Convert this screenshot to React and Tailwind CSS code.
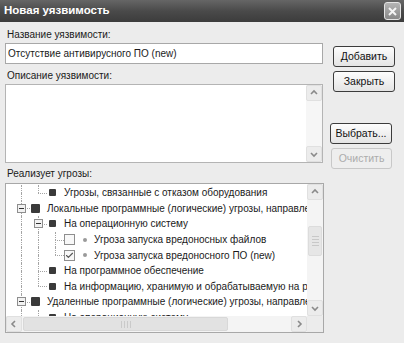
import { Check } from 'lucide-react'

const font = { fontFamily: '"Liberation Sans", Arial, sans-serif' }

function Btn({ children, disabled, className = '' }) {
  return (
    <div
      className={`h-[21px] flex items-center justify-center rounded-[3px] border text-[10.5px] ${
        disabled
          ? 'border-[#c8c8c8] text-[#acacac] bg-[#eeeeee]'
          : 'border-[#3c3c3c] text-[#111] bg-gradient-to-b from-[#fdfdfd] to-[#e4e4e4]'
      } ${className}`}
    >
      {children}
    </div>
  )
}

function Arrow({ dir }) {
  const paths = {
    up: 'M2 6 L5 3 L8 6',
    down: 'M2 4 L5 7 L8 4',
    left: 'M6 2 L3 5 L6 8',
    right: 'M4 2 L7 5 L4 8'
  }
  return (
    <svg width="10" height="10" viewBox="0 0 10 10">
      <path d={paths[dir]} fill="none" stroke="#8a8a8a" strokeWidth="1.6" />
    </svg>
  )
}

function SbBtn({ dir }) {
  return (
    <div className="w-[16px] h-[16px] flex-shrink-0 flex items-center justify-center bg-[#ececec] border border-[#e0e0e0] rounded-[2px]">
      <Arrow dir={dir} />
    </div>
  )
}

function Cell({ v = 'none', h = false, box = false }) {
  // v: none | full | top
  return (
    <div className="w-[17px] h-full flex-shrink-0 flex flex-col items-center relative">
      <div className="h-1/2 w-full flex justify-center">
        {v !== 'none' && <div className="border-l border-dotted border-[#a4a4a4] h-full" />}
      </div>
      <div className="h-1/2 w-full flex justify-center">
        {v === 'full' && <div className="border-l border-dotted border-[#a4a4a4] h-full" />}
      </div>
      {h && (
        <div className="absolute top-1/2 left-[8px] w-[9px] border-t border-dotted border-[#a4a4a4]" />
      )}
      {box && (
        <div className="absolute top-[3px] left-[4px] w-[9px] h-[9px] bg-[#f2f2f2] border border-[#8e8e8e] flex items-center justify-center">
          <div className="w-[5px] h-px bg-[#333]" />
        </div>
      )}
    </div>
  )
}

function Row({ cells, children }) {
  return (
    <div className="h-[15.6px] flex items-center whitespace-nowrap">
      {cells}
      {children}
    </div>
  )
}

function Sq({ big }) {
  return (
    <div className="w-[17px] flex-shrink-0 flex items-center">
      <div
        className={`${big ? 'w-[9px] h-[9px] ml-[1px]' : 'w-[7px] h-[7px] ml-[2px]'} bg-[#3a3a3a] rounded-[1px]`}
      />
    </div>
  )
}

function Leaf({ checked }) {
  return (
    <>
      <div className="w-[11px] h-[11px] flex-shrink-0 border border-[#8e8e8e] bg-[#f8f8f8] flex items-center justify-center">
        {checked && <Check size={9} strokeWidth={3} color="#555" />}
      </div>
      <div className="w-[19px] flex-shrink-0 flex justify-center">
        <div className="w-[4px] h-[4px] rounded-full bg-[#9a9a9a]" />
      </div>
    </>
  )
}

export default function App() {
  return (
    <div className="w-[404px] h-[343px] bg-[#ececec] text-[#1a1a1a] overflow-hidden flex flex-col" style={font}>
      {/* title bar */}
      <div className="h-[22px] flex-shrink-0 flex items-center justify-between bg-gradient-to-b from-[#666] via-[#4a4a4a] to-[#3c3c3c] pl-[4px] pr-[3px]">
        <span className="text-white font-bold text-[11.5px]">Новая уязвимость</span>
        <div className="w-[17px] h-[18px] rounded-[3px] border border-[#e4e4e4] bg-gradient-to-b from-[#b4b4b4] to-[#888] flex items-center justify-center">
          <svg width="11" height="11" viewBox="0 0 11 11">
            <path d="M2 2 L9 9 M9 2 L2 9" stroke="#f4f4f4" strokeWidth="2" />
          </svg>
        </div>
      </div>

      <div className="flex flex-1">
        {/* left column */}
        <div className="ml-[5px] w-[319px] flex flex-col text-[10px]">
          <div className="mt-[7px] h-[12px] leading-[12px] pl-[2px]">Название уязвимости:</div>
          <div className="mt-[2px] h-[21px] w-[318px] bg-white border border-[#a8a8a8] flex items-center px-[2px]">
            Отсутствие антивирусного ПО (new)
          </div>
          <div className="mt-[6px] h-[12px] leading-[12px] pl-[2px]">Описание уязвимости:</div>
          <div className="mt-[2px] h-[79px] w-[318px] bg-white border border-[#b4b4b4] flex justify-end">
            <div className="w-[16px] flex flex-col justify-between bg-[#f6f6f6]">
              <SbBtn dir="up" />
              <SbBtn dir="down" />
            </div>
          </div>
          <div className="mt-[5px] h-[12px] leading-[12px] pl-[2px]">Реализует угрозы:</div>
          <div className="mt-[3px] h-[150px] w-[319px] bg-white border border-[#a8a8a8] flex flex-col">
            <div className="flex flex-1 min-h-0">
              <div className="flex-1 overflow-hidden pt-[1px] pl-[7px]">
                <Row cells={<><Cell v="full" /><Cell v="top" h /></>}>
                  <Sq />
                  <span>Угрозы, связанные с отказом оборудования</span>
                </Row>
                <Row cells={<Cell v="full" h box />}>
                  <Sq big />
                  <span>Локальные программные (логические) угрозы, направленные</span>
                </Row>
                <Row cells={<><Cell v="full" /><Cell v="full" h box /></>}>
                  <Sq />
                  <span>На операционную систему</span>
                </Row>
                <Row cells={<><Cell v="full" /><Cell v="full" /><Cell v="full" h /></>}>
                  <Leaf />
                  <span>Угроза запуска вредоносных файлов</span>
                </Row>
                <Row cells={<><Cell v="full" /><Cell v="full" /><Cell v="top" h /></>}>
                  <Leaf checked />
                  <span>Угроза запуска вредоносного ПО (new)</span>
                </Row>
                <Row cells={<><Cell v="full" /><Cell v="full" h /></>}>
                  <Sq />
                  <span>На программное обеспечение</span>
                </Row>
                <Row cells={<><Cell v="full" /><Cell v="top" h /></>}>
                  <Sq />
                  <span>На информацию, хранимую и обрабатываемую на ресурсах</span>
                </Row>
                <Row cells={<Cell v="full" h box />}>
                  <Sq big />
                  <span>Удаленные программные (логические) угрозы, направленные</span>
                </Row>
                <Row cells={<><Cell v="full" /><Cell v="full" h /></>}>
                  <Sq />
                  <span>На операционную систему</span>
                </Row>
              </div>
              {/* vertical scrollbar */}
              <div className="w-[16px] flex flex-col bg-[#f4f4f4]">
                <SbBtn dir="up" />
                <div className="flex-1 flex flex-col pt-[26px]">
                  <div className="h-[30px] mx-[1px] rounded-[2px] border border-[#dcdcdc] bg-[#e6e6e6] flex flex-col items-center justify-center gap-[2px]">
                    <div className="w-[7px] h-px bg-[#c8c8c8]" />
                    <div className="w-[7px] h-px bg-[#c8c8c8]" />
                    <div className="w-[7px] h-px bg-[#c8c8c8]" />
                    <div className="w-[7px] h-px bg-[#c8c8c8]" />
                  </div>
                </div>
                <SbBtn dir="down" />
              </div>
            </div>
            {/* horizontal scrollbar */}
            <div className="h-[16px] flex bg-[#f4f4f4]">
              <SbBtn dir="left" />
              <div className="flex-1 flex items-stretch pl-[1px]">
                <div className="w-[205px] my-[1px] rounded-[2px] border border-[#d8d8d8] bg-[#e2e2e2] flex items-center justify-center gap-[2px]">
                  <div className="w-px h-[7px] bg-[#cacaca]" />
                  <div className="w-px h-[7px] bg-[#cacaca]" />
                  <div className="w-px h-[7px] bg-[#cacaca]" />
                  <div className="w-px h-[7px] bg-[#cacaca]" />
                </div>
              </div>
              <SbBtn dir="right" />
              <div className="w-[16px] bg-[#ececec]" />
            </div>
          </div>
        </div>

        {/* right column */}
        <div className="flex flex-col">
          <Btn className="mt-[24px] ml-[9px] w-[62px]">Добавить</Btn>
          <Btn className="mt-[4px] ml-[9px] w-[62px]">Закрыть</Btn>
          <Btn className="mt-[31px] ml-[6px] w-[62px]">Выбрать...</Btn>
          <Btn disabled className="mt-[4px] ml-[7px] w-[61px]">Очистить</Btn>
        </div>
      </div>
    </div>
  )
}
